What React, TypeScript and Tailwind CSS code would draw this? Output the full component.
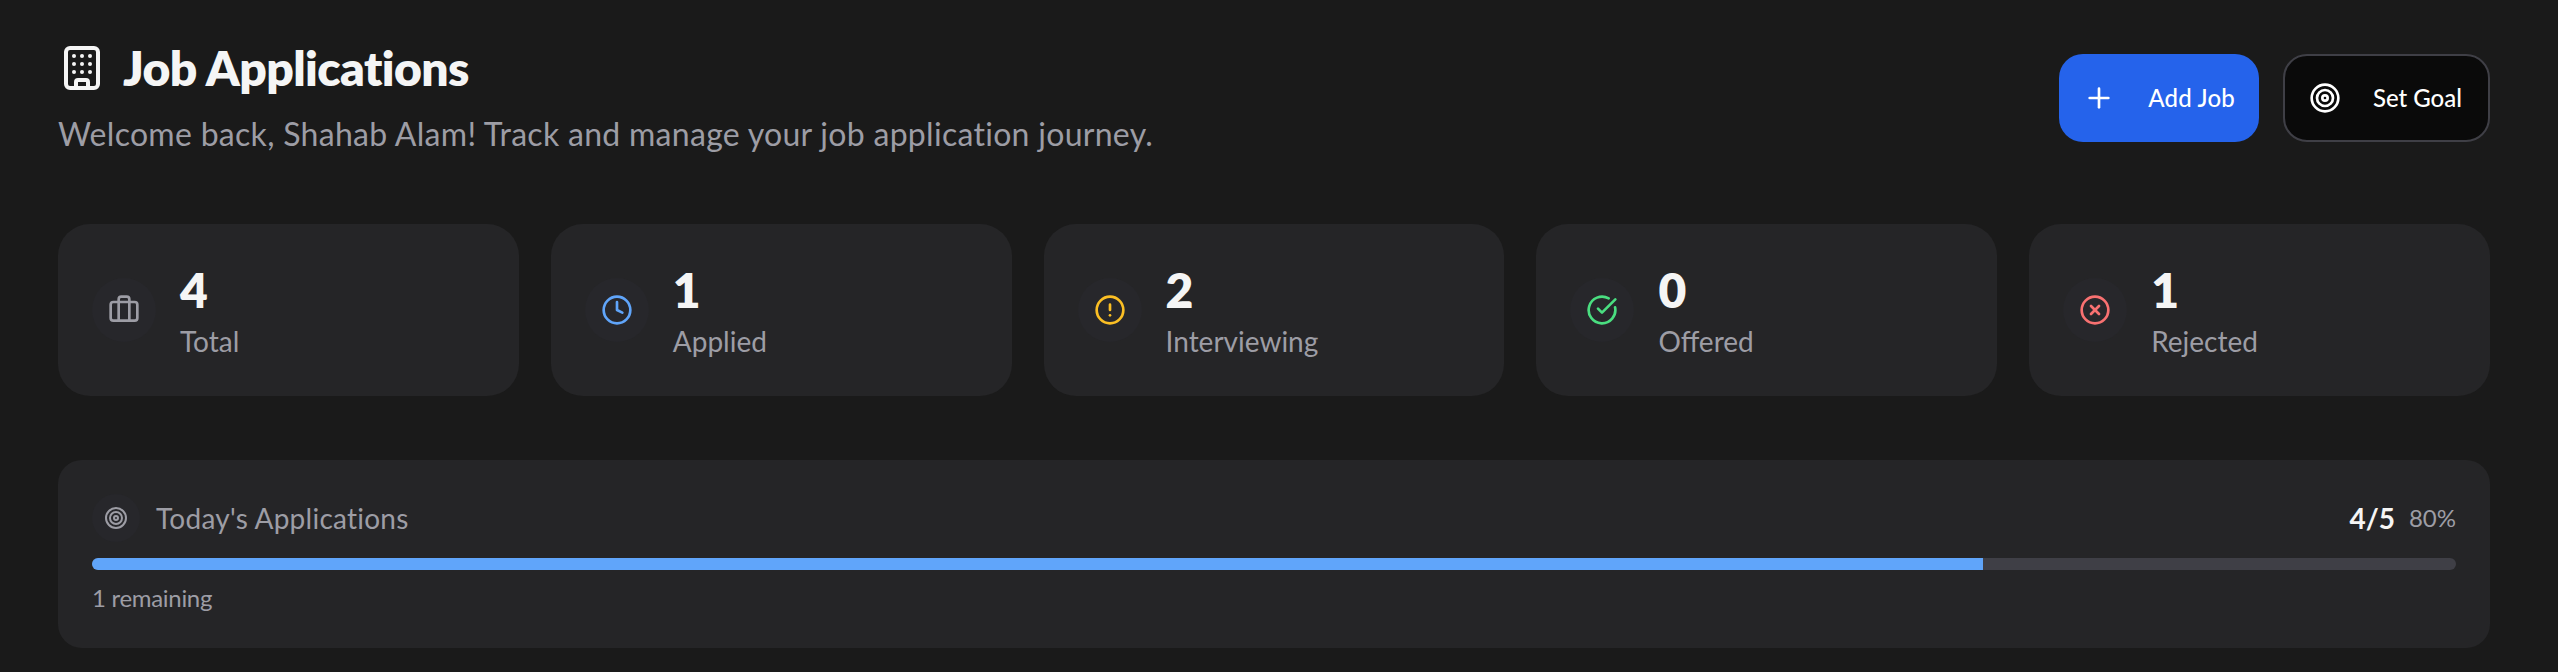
import { Building, Plus, Target, Briefcase, Clock, CircleAlert, CircleCheckBig, CircleX } from "lucide-react";

const stats = [
  { value: "4", label: "Total", Icon: Briefcase, color: "text-[#9d9da5]" },
  { value: "1", label: "Applied", Icon: Clock, color: "text-[#60a5fa]" },
  { value: "2", label: "Interviewing", Icon: CircleAlert, color: "text-[#fbbf24]" },
  { value: "0", label: "Offered", Icon: CircleCheckBig, color: "text-[#4ade80]" },
  { value: "1", label: "Rejected", Icon: CircleX, color: "text-[#f87171]" },
];

export default function App() {
  return (
    <div className="h-[672px] overflow-hidden bg-[#1a1a1a] pl-[58px] pr-[68px] pt-[44px] font-['Lato',sans-serif]">
      {/* header */}
      <div className="flex items-start justify-between">
        <div>
          <div className="flex h-[48px] items-center gap-[17px]">
            <Building className="h-[48px] w-[48px] text-[#f5f5f5]" strokeWidth={2} />
            <h1 className="text-[48px] font-extrabold leading-[48px] tracking-[-0.6px] text-[#f5f5f5]">Job Applications</h1>
          </div>
          <p className="mt-[22px] text-[32px] leading-[40px] tracking-[0.29px] text-[#9d9da5]">
            Welcome back, Shahab Alam! Track and manage your job application journey.
          </p>
        </div>
        <div className="mt-[10px] flex gap-[24px]">
          <button className="flex h-[88px] w-[200px] items-center justify-between rounded-[24px] bg-[#2563eb] pl-[24px] pr-[24px] text-[24px] font-medium tracking-[0.2px] text-white">
            <Plus className="h-[32px] w-[32px]" strokeWidth={2} />
            <span>Add Job</span>
          </button>
          <button className="flex h-[88px] w-[207px] items-center justify-between rounded-[24px] border-2 border-[#3f3f46] bg-[#0a0a0a] pl-[24px] pr-[26px] text-[24px] font-medium text-white">
            <Target className="h-[32px] w-[32px]" strokeWidth={2} />
            <span>Set Goal</span>
          </button>
        </div>
      </div>

      {/* stat cards */}
      <div className="mt-[70px] grid grid-cols-5 gap-[32px]">
        {stats.map((s) => (
          <div key={s.label} className="flex h-[172px] items-center gap-[24px] rounded-[32px] bg-[#252527] px-[34px]">
            <div className="flex h-[64px] w-[64px] items-center justify-center rounded-full bg-[#27272b]">
              <s.Icon className={`h-[32px] w-[32px] ${s.color}`} strokeWidth={2} />
            </div>
            <div className="pt-[4px]">
              <div className="text-[48px] font-extrabold leading-[54px] text-[#f5f5f5]">{s.value}</div>
              <div className="mt-[4px] text-[28px] leading-[40px] text-[#9d9da5]">{s.label}</div>
            </div>
          </div>
        ))}
      </div>

      {/* daily goal */}
      <div className="mt-[64px] h-[188px] rounded-[24px] bg-[#252527] px-[34px] pt-[34px]">
        <div className="flex items-center justify-between">
          <div className="flex items-center gap-[16px]">
            <div className="flex h-[48px] w-[48px] items-center justify-center rounded-full bg-[#27272b]">
              <Target className="h-[24px] w-[24px] text-[#9d9da5]" strokeWidth={2} />
            </div>
            <span className="text-[28px] tracking-[0.25px] text-[#9d9da5]">Today's Applications</span>
          </div>
          <div className="flex items-center gap-[14px]">
            <span className="text-[28px] font-bold text-[#f5f5f5]">4/5</span>
            <span className="text-[24px] text-[#9d9da5]">80%</span>
          </div>
        </div>
        <div className="mt-[16px] h-[12px] overflow-hidden rounded-full bg-[#3f3f46]">
          <div className="h-full w-[80%] bg-[#60a5fa]" />
        </div>
        <p className="mt-[12px] text-[24px] leading-[32px] tracking-[-0.3px] text-[#9d9da5]">1 remaining</p>
      </div>
    </div>
  );
}
